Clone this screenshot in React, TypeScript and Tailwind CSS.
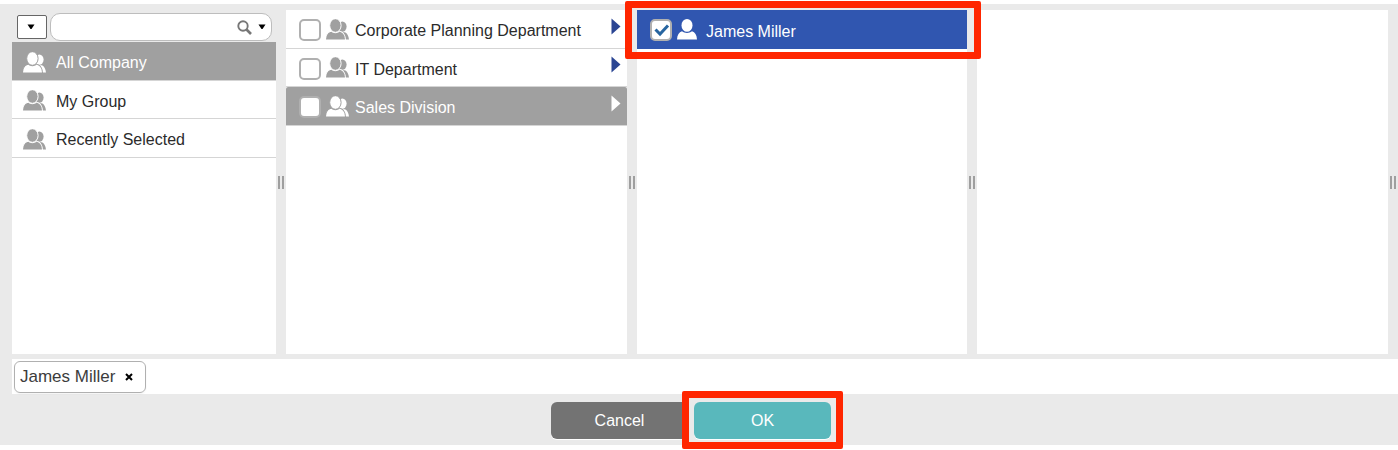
import { useState } from 'react';

interface Entry {
  id: string;
  name: string;
}

const groups: Entry[] = [
  { id: 'all', name: 'All Company' },
  { id: 'mine', name: 'My Group' },
  { id: 'recent', name: 'Recently Selected' },
];

const departments: Entry[] = [
  { id: 'planning', name: 'Corporate Planning Department' },
  { id: 'it', name: 'IT Department' },
  { id: 'sales', name: 'Sales Division' },
];

function GroupIcon({ outline }: { outline: string }) {
  return (
    <svg width="23" height="21" viewBox="0 0 23 21" fill="currentColor" className="shrink-0" aria-hidden="true">
      <ellipse cx="16.4" cy="7.6" rx="4.2" ry="5.2" />
      <path d="M17 13.200h2c2.200 1 3.600 3.600 4 7.300h-4z" />
      <ellipse cx="9.400" cy="6.500" rx="5.700" ry="6.800" stroke={outline} strokeWidth="1" />
      <path d="M5.200 12.300c2.400 1.900 6 1.900 8.400 0 3.600.8 5.600 3.500 5.900 8.700H-.500c.3-5.200 2.200-7.900 5.700-8.700z" stroke={outline} strokeWidth="1" />
    </svg>
  );
}

function PersonIcon() {
  return (
    <svg width="20" height="21" viewBox="0 0 20 21" fill="currentColor" className="shrink-0" aria-hidden="true">
      <ellipse cx="10" cy="6.400" rx="5.500" ry="6.400" />
      <path d="M5 12.300c3 2.200 7 2.200 10 0 3 .9 4.700 3.500 5 8.200H0c.3-4.700 2-7.300 5-8.200z" />
    </svg>
  );
}

function Caret() {
  return (
    <svg width="8" height="6" viewBox="0 0 8 6" className="shrink-0" aria-hidden="true">
      <path d="M0.500 0.500h7L4.500 5h-1z" fill="#000" />
    </svg>
  );
}

function Splitter() {
  return (
    <div className="flex w-2.5 shrink-0 items-center justify-center gap-0.5" role="separator" aria-orientation="vertical">
      <span className="h-[13px] w-0.5 bg-[#9f9f9f]" />
      <span className="h-[13px] w-0.5 bg-[#9f9f9f]" />
    </div>
  );
}

interface TickBoxProps {
  id: string;
  checked: boolean;
  onChange: () => void;
}

function TickBox({ id, checked, onChange }: TickBoxProps) {
  return (
    <span className="relative h-[22px] w-[22px] shrink-0">
      <input
        id={id}
        type="checkbox"
        checked={checked}
        onChange={onChange}
        className="block h-[22px] w-[22px] appearance-none rounded-[5px] border-2 border-[#b0b0b0] bg-white"
      />
      {checked && (
        <svg viewBox="0 0 22 22" className="pointer-events-none absolute inset-0" aria-hidden="true">
          <path d="M5.500 10.500l4.500 4.500 8-8.500" fill="none" stroke="#2765a0" strokeWidth="3" />
        </svg>
      )}
    </span>
  );
}

export default function App() {
  const [activeGroup, setActiveGroup] = useState('all');
  const [activeDepartment, setActiveDepartment] = useState('sales');
  const [ticked, setTicked] = useState<string[]>(['james']);

  const toggle = (id: string) => {
    setTicked((prev) => (prev.includes(id) ? prev.filter((item) => item !== id) : [...prev, id]));
  };

  return (
    <div className="bg-white pt-1 pb-[5px] font-['Liberation_Sans',Arial,sans-serif] text-base text-[#2b2b2b]">
      <main className="bg-[#eaeaea]">
        <div className="flex min-h-[350px] pt-1.5 pl-3">
          {/* Groups */}
          <section className="flex w-[264px] shrink-0 flex-col">
            <div className="flex h-8 items-center gap-[3px] pt-0.5 pr-1 pl-[5px]">
              <button
                type="button"
                aria-label="Search scope"
                className="flex h-6 w-[30px] shrink-0 items-center justify-center rounded-xs border border-[#666] bg-white pr-0.5"
              >
                <Caret />
              </button>
              <div className="flex h-7 min-w-0 flex-1 items-center rounded-[10px] border border-[#bdbdbd] bg-white pr-[5px]">
                <input type="text" aria-label="Search" className="h-full min-w-0 flex-1 bg-transparent pl-2 outline-none" />
                <button type="button" aria-label="Run search" className="flex items-center gap-1.5">
                  <svg width="15" height="15" viewBox="0 0 15 15" fill="none" stroke="#777" aria-hidden="true">
                    <circle cx="6" cy="6" r="4.700" strokeWidth="1.900" />
                    <path d="M9.500 9.500l4.500 4.500" strokeWidth="2.600" />
                  </svg>
                  <Caret />
                </button>
              </div>
            </div>
            <ul className="flex-1 bg-white">
              {groups.map((group) => {
                const active = group.id === activeGroup;
                return (
                  <li
                    key={group.id}
                    className={`h-[39px] border-b border-[#d5d5d5] even:h-[38px] ${active ? 'bg-[#a0a0a0] text-white' : 'bg-white'}`}
                  >
                    <button
                      type="button"
                      onClick={() => setActiveGroup(group.id)}
                      className="flex h-full w-full items-center gap-2.5 pt-1 pl-[11px] text-left"
                    >
                      <span className={`shrink-0 pb-0.5 ${active ? 'text-white' : 'text-[#a0a0a0]'}`}>
                        <GroupIcon outline={active ? '#a0a0a0' : '#fff'} />
                      </span>
                      {group.name}
                    </button>
                  </li>
                );
              })}
            </ul>
          </section>
          <Splitter />

          {/* Departments */}
          <section className="w-[341px] shrink-0 bg-white">
            <ul>
              {departments.map((department) => {
                const active = department.id === activeDepartment;
                return (
                  <li
                    key={department.id}
                    className={`flex h-[39px] items-center border-b border-[#d5d5d5] pt-0.5 pr-1.5 pl-[13px] even:h-[38px] ${active ? 'rounded-t-xs bg-[#a0a0a0] text-white' : ''}`}
                  >
                    <TickBox id={department.id} checked={ticked.includes(department.id)} onChange={() => toggle(department.id)} />
                    <label htmlFor={department.id} className="flex flex-1 items-center gap-1.5 pt-0.5 pl-[5px]">
                      <span className={`shrink-0 pb-1 ${active ? 'text-white' : 'text-[#a0a0a0]'}`}>
                        <GroupIcon outline={active ? '#a0a0a0' : '#fff'} />
                      </span>
                      {department.name}
                    </label>
                    <button
                      type="button"
                      aria-label={`Open ${department.name}`}
                      onClick={() => setActiveDepartment(department.id)}
                      className="pb-2"
                    >
                      <svg width="10" height="17" viewBox="0 0 10 17" aria-hidden="true">
                        <path d="M0.500 0.500L9.500 8.500L0.500 16.500z" fill={active ? '#fff' : '#2a4593'} />
                      </svg>
                    </button>
                  </li>
                );
              })}
            </ul>
          </section>
          <Splitter />

          {/* Members */}
          <section className="w-[330px] shrink-0 bg-white">
            <div className="relative flex h-[39px] items-center bg-[#3056b0] pl-[13px] text-white">
              <TickBox id="james" checked={ticked.includes('james')} onChange={() => toggle('james')} />
              <label htmlFor="james" className="flex flex-1 items-center gap-[9px] pt-1 pl-[5px]">
                <span className="shrink-0 pb-1">
                  <PersonIcon />
                </span>
                James Miller
              </label>
              <span className="pointer-events-none absolute -top-[9px] -right-3.5 -bottom-2.5 -left-3 z-10 rounded-xs border-7 border-[#ff2600]" />
            </div>
          </section>
          <Splitter />

          <section className="flex-1 bg-white" />
          <Splitter />
        </div>

        {/* Current selection */}
        <div className="pt-[5px] pl-3">
          <div className="h-[35px] bg-white px-0.5 pt-0.5">
            <span className="inline-flex h-8 items-center gap-2.5 rounded-md border border-[#b0b0b0] pr-3 pl-[5px] text-[17px] text-[#3c3c3c] shadow-xs">
              James Miller
              <button type="button" aria-label="Remove James Miller">
                <svg width="8" height="8" viewBox="0 0 8 8" stroke="#000" strokeWidth="2" aria-hidden="true">
                  <path d="M1 1l6 6M7 1l-6 6" />
                </svg>
              </button>
            </span>
          </div>
        </div>

        <footer className="flex justify-center gap-1.5 pt-2 pr-4 pb-1.5 text-white">
          <button type="button" className="h-[37px] w-[137px] rounded-md bg-[#737373] shadow-[0_1px_0_#fff]">
            Cancel
          </button>
          <div className="relative">
            <button type="button" className="h-[37px] w-[137px] rounded-md bg-[#59b8bc] shadow-[0_1px_0_#fff]">
              OK
            </button>
            <span className="pointer-events-none absolute -top-[11px] -right-3 -bottom-2.5 -left-3 rounded-xs border-7 border-[#ff2600]" />
          </div>
        </footer>
      </main>
    </div>
  );
}
